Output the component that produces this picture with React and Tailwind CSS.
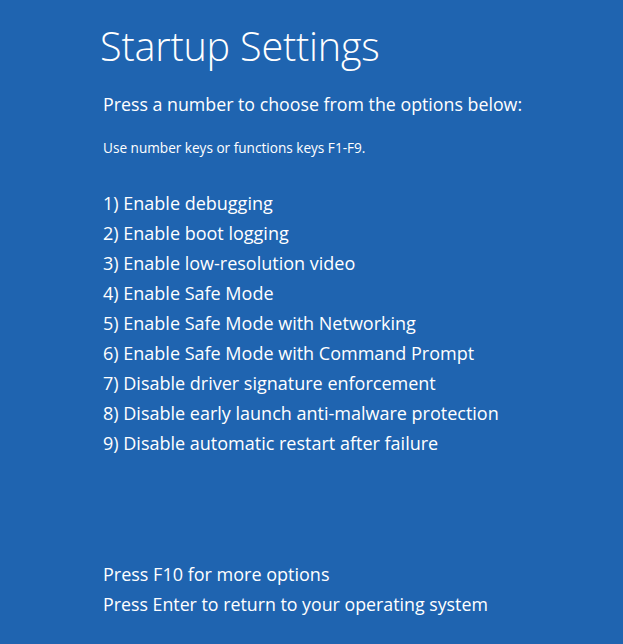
export default function App() {
  const items = [
    "1) Enable debugging",
    "2) Enable boot logging",
    "3) Enable low-resolution video",
    "4) Enable Safe Mode",
    "5) Enable Safe Mode with Networking",
    "6) Enable Safe Mode with Command Prompt",
    "7) Disable driver signature enforcement",
    "8) Disable early launch anti-malware protection",
    "9) Disable automatic restart after failure",
  ];
  return (
    <div className="w-[623px] h-[644px] bg-[#1f64b0] text-white font-['Open_Sans',sans-serif] pl-[101px] pt-[22px] flex flex-col overflow-hidden">
      <h1 className="text-[39.6px] font-light leading-[48px] tracking-[-0.2px] -ml-[1px]">Startup Settings</h1>
      <p className="mt-[20px] text-[17.8px] leading-[28px] pl-[2px]">Press a number to choose from the options below:</p>
      <p className="mt-[21px] text-[13.6px] leading-[18px] pl-[2px]">Use number keys or functions keys F1-F9.</p>
      <ul className="mt-[31px] flex flex-col pl-[2px]">
        {items.map((t) => (
          <li key={t} className="text-[18px] leading-[30px]">{t}</li>
        ))}
      </ul>
      <div className="mt-[101px] flex flex-col pl-[2px]">
        <p className="text-[18px] leading-[30px]">Press F10 for more options</p>
        <p className="text-[17.8px] leading-[30px]">Press Enter to return to your operating system</p>
      </div>
    </div>
  );
}
